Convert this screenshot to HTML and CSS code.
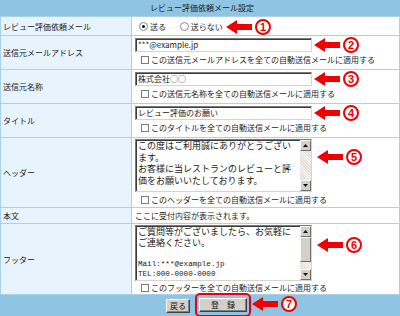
FILE: index.html
```html
<!DOCTYPE html>
<html lang="ja">
<head>
    <meta charset="UTF-8">
    <meta name="viewport" content="width=device-width, initial-scale=1.0">
    <title>レビュー評価依頼メール設定</title>
    <link rel="stylesheet" href="styles.css">
</head>
<body>
    <div class="page">
        <div class="title">レビュー評価依頼メール設定</div>
        <table class="form">
            <tr class="row-send">
                <th>レビュー評価依頼メール</th>
                <td class="middle">
                    <span class="radio on"></span>送る
                    <span class="radio second"></span>送らない
                </td>
            </tr>
            <tr class="row-field">
                <th>送信元メールアドレス</th>
                <td>
                    <div class="textbox">***@example.jp</div>
                    <div class="check-line"><span class="check"></span>この送信元メールアドレスを全ての自動送信メールに適用する</div>
                </td>
            </tr>
            <tr class="row-field">
                <th>送信元名称</th>
                <td>
                    <div class="textbox">株式会社○○</div>
                    <div class="check-line"><span class="check"></span>この送信元名称を全ての自動送信メールに適用する</div>
                </td>
            </tr>
            <tr class="row-field">
                <th>タイトル</th>
                <td>
                    <div class="textbox">レビュー評価のお願い</div>
                    <div class="check-line"><span class="check"></span>このタイトルを全ての自動送信メールに適用する</div>
                </td>
            </tr>
            <tr class="row-area">
                <th>ヘッダー</th>
                <td>
                    <div class="textarea">
                        <div class="area-text">
                            <div>この度はご利用誠にありがとうござい</div>
                            <div>ます。</div>
                            <div>お客様に当レストランのレビューと評</div>
                            <div>価をお願いいたしております。</div>
                        </div>
                        <div class="scrollbar">
                            <span class="sb-btn"><svg viewBox="0 0 5 3"><polygon points="2.5,0 5,3 0,3"/></svg></span>
                            <span class="sb-track"></span>
                            <span class="sb-btn"><svg viewBox="0 0 5 3"><polygon points="0,0 5,0 2.5,3"/></svg></span>
                        </div>
                    </div>
                    <div class="check-line"><span class="check"></span>このヘッダーを全ての自動送信メールに適用する</div>
                </td>
            </tr>
            <tr class="row-body">
                <th>本文</th>
                <td class="middle">ここに受付内容が表示されます。</td>
            </tr>
            <tr class="row-footer">
                <th>フッター</th>
                <td>
                    <div class="textarea tall">
                        <div class="area-text tight">
                            <div>ご質問等がございましたら、お気軽に</div>
                            <div>ご連絡ください。</div>
                            <div>&nbsp;</div>
                            <div class="ascii">Mail:***@example.jp</div>
                            <div class="ascii">TEL:000-0000-0000</div>
                        </div>
                        <div class="scrollbar">
                            <span class="sb-btn"><svg viewBox="0 0 5 3"><polygon points="2.5,0 5,3 0,3"/></svg></span>
                            <span class="sb-thumb"></span>
                            <span class="sb-track"></span>
                            <span class="sb-btn"><svg viewBox="0 0 5 3"><polygon points="0,0 5,0 2.5,3"/></svg></span>
                        </div>
                    </div>
                    <div class="check-line short"><span class="check"></span>このフッターを全ての自動送信メールに適用する</div>
                </td>
            </tr>
        </table>
        <div class="actions">
            <button class="btn">戻る</button>
            <span class="highlight"><button class="btn wide">登　録</button></span>
        </div>

        <div class="mark m1"><svg class="arrow" viewBox="0 0 26 14"><polygon points="0,7 11,0 11,4 26,4 26,10 11,10 11,14"/></svg><span class="num">1</span></div>
        <div class="mark m2"><svg class="arrow" viewBox="0 0 26 14"><polygon points="0,7 11,0 11,4 26,4 26,10 11,10 11,14"/></svg><span class="num">2</span></div>
        <div class="mark m3"><svg class="arrow" viewBox="0 0 26 14"><polygon points="0,7 11,0 11,4 26,4 26,10 11,10 11,14"/></svg><span class="num">3</span></div>
        <div class="mark m4"><svg class="arrow" viewBox="0 0 26 14"><polygon points="0,7 11,0 11,4 26,4 26,10 11,10 11,14"/></svg><span class="num">4</span></div>
        <div class="mark m5"><svg class="arrow" viewBox="0 0 26 14"><polygon points="0,7 11,0 11,4 26,4 26,10 11,10 11,14"/></svg><span class="num">5</span></div>
        <div class="mark m6"><svg class="arrow" viewBox="0 0 26 14"><polygon points="0,7 11,0 11,4 26,4 26,10 11,10 11,14"/></svg><span class="num">6</span></div>
        <div class="mark m7"><svg class="arrow" viewBox="0 0 26 14"><polygon points="0,7 11,0 11,4 26,4 26,10 11,10 11,14"/></svg><span class="num">7</span></div>
    </div>
</body>
</html>
```

FILE: styles.css
```css
* {
    box-sizing: border-box;
}
body {
    margin: 0;
    background: #fff;
    font-family: "Noto Sans CJK JP", sans-serif;
    font-size: 8px;
    color: #1a1a1a;
}
.page {
    position: relative;
    width: 400px;
    height: 316px;
    overflow: hidden;
}
.title {
    height: 16px;
    line-height: 16px;
    background: #8fc4e2;
    text-align: center;
    padding-left: 4px;
}
.form {
    width: 400px;
    border-collapse: separate;
    border-spacing: 1px;
    background: #a9d2ea;
}
.form th {
    width: 130px;
    background: #e7f4fd;
    text-align: left;
    font-weight: normal;
    padding: 0 0 0 2px;
}
.form td {
    background: #fff;
    padding: 2px 2px 0 3px;
    vertical-align: top;
}
.form td.middle {
    vertical-align: middle;
    padding-top: 0;
}
.row-send td, .row-send th {
    height: 18px;
}
.row-field td, .row-field th {
    height: 33px;
}
.row-area td, .row-area th {
    height: 69px;
}
.row-area td {
    padding-top: 1px;
}
.row-body td, .row-body th {
    height: 15px;
}
.row-footer td, .row-footer th {
    height: 70px;
}
.row-footer td {
    padding-top: 1px;
}
.radio {
    display: inline-block;
    width: 9px;
    height: 9px;
    margin: 0 2px 0 4px;
    border: 1px solid #8a8a8a;
    border-radius: 50%;
    background: #fff;
    vertical-align: -1px;
    position: relative;
}
.radio.second {
    margin-left: 12px;
}
.radio.on::after {
    content: "";
    position: absolute;
    left: 2px;
    top: 2px;
    width: 3px;
    height: 3px;
    border-radius: 50%;
    background: #111;
}
.textbox {
    width: 177px;
    height: 14px;
    line-height: 12px;
    padding-left: 2px;
    border: 1px solid;
    border-color: #7a7a7a #d8d4cc #d8d4cc #7a7a7a;
    box-shadow: inset 1px 1px 0 #3c3c3c;
    white-space: nowrap;
    overflow: hidden;
}
.check-line {
    height: 15px;
    line-height: 15px;
    padding-left: 6px;
    white-space: nowrap;
}
.check-line.short {
    height: 13px;
    line-height: 13px;
}
.check {
    display: inline-block;
    width: 8px;
    height: 8px;
    margin-right: 2px;
    border: 1px solid #7b7b7b;
    background: #fff;
    vertical-align: -1px;
}
.textarea {
    display: flex;
    width: 177px;
    height: 53px;
    border: 1px solid;
    border-color: #7a7a7a #d8d4cc #d8d4cc #7a7a7a;
    box-shadow: inset 1px 1px 0 #3c3c3c;
    overflow: hidden;
}
.textarea.tall {
    height: 56px;
}
.area-text {
    flex: 1;
    padding: 0 0 0 2px;
    font-size: 9px;
    line-height: 11.7px;
    white-space: nowrap;
    overflow: hidden;
}
.area-text.tight {
    padding-top: 1px;
    line-height: 10.6px;
}
.ascii {
    font-family: "Liberation Mono", monospace;
    font-size: 7.6px;
}
.scrollbar {
    display: flex;
    flex-direction: column;
    width: 11px;
    background: #ebe9e4;
}
.sb-btn, .sb-thumb {
    display: flex;
    align-items: center;
    justify-content: center;
    height: 11px;
    background: #d4d0c8;
    border: 1px solid;
    border-color: #fff #6e6e6e #6e6e6e #fff;
}
.sb-btn svg {
    width: 5px;
    height: 3px;
    fill: #111;
}
.sb-thumb {
    height: 25px;
}
.sb-track {
    flex: 1;
    background: repeating-linear-gradient(45deg, #e2dfd8 0 1px, #f4f3ef 1px 2px);
}
.actions {
    display: flex;
    align-items: center;
    justify-content: center;
    gap: 5px;
    height: 21px;
    padding-left: 17px;
    background: #8fc4e2;
}
.btn {
    height: 14px;
    padding: 0 3px;
    font-family: "Noto Sans CJK JP", sans-serif;
    font-size: 8px;
    line-height: 12px;
    color: #111;
    background: #d4d0c8;
    border: 1px solid;
    border-color: #fff #404040 #404040 #fff;
    box-shadow: inset -1px -1px 0 #808080;
}
.btn.wide {
    width: 48px;
}
.highlight {
    display: inline-flex;
    margin: -4px 0 -2px;
    padding: 3px 2px;
    border: 2px solid #e60012;
    border-radius: 5px;
}
.mark {
    position: absolute;
    display: flex;
    align-items: center;
    gap: 3px;
}
.arrow {
    width: 26px;
    height: 14px;
    fill: #f00000;
}
.num {
    display: inline-flex;
    align-items: center;
    justify-content: center;
    width: 16px;
    height: 16px;
    border: 2px solid #f00000;
    border-radius: 50%;
    background: #fff;
    color: #f00000;
    font-family: "Liberation Sans", sans-serif;
    font-size: 11px;
    font-weight: bold;
}
.m1 { left: 226px; top: 19px; }
.m2 { left: 314px; top: 37px; }
.m3 { left: 314px; top: 71px; }
.m4 { left: 314px; top: 105px; }
.m5 { left: 317px; top: 149px; }
.m6 { left: 317px; top: 237px; }
.m7 { left: 252px; top: 296px; }
```
